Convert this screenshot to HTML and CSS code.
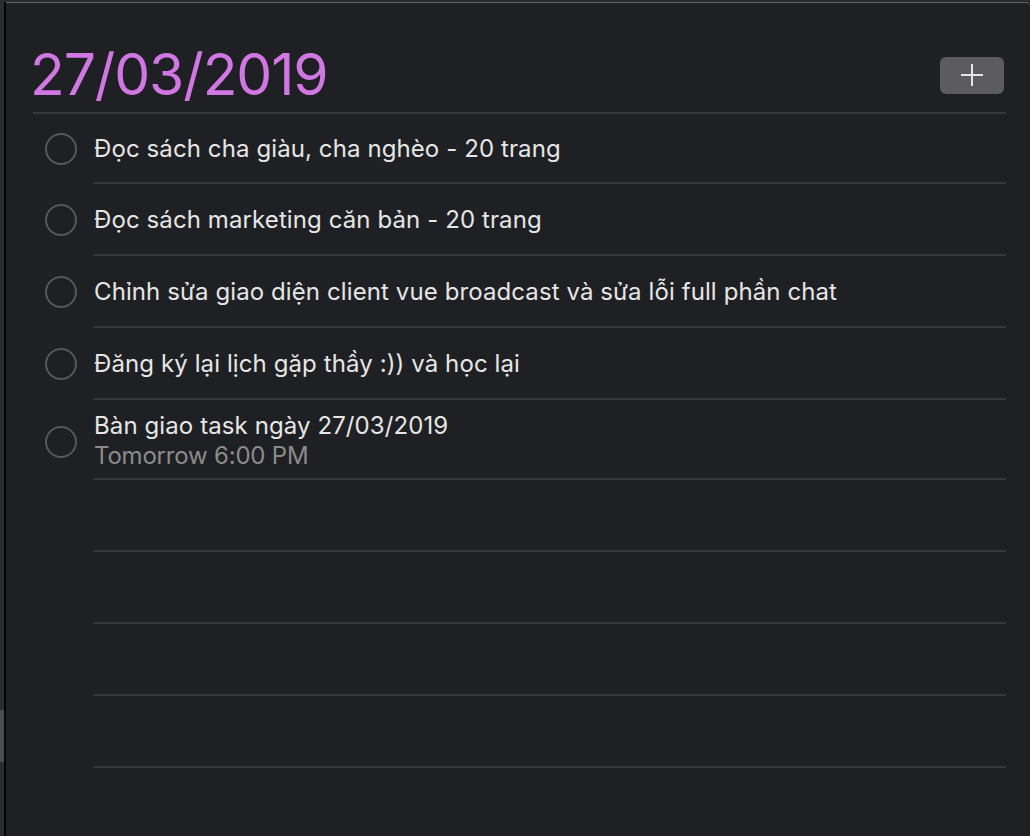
FILE: index.html
```html
<!DOCTYPE html>
<html lang="vi">
<head>
<meta charset="utf-8">
<title>Reminders</title>
<link rel="stylesheet" href="styles.css">
</head>
<body>
<div class="window">
  <div class="sidebar"><div class="thumb"></div></div>
  <main class="main">
    <header class="header">
      <h1 class="title">27/03/2019</h1>
      <button class="add" aria-label="Add">
        <svg width="24" height="24" viewBox="0 0 24 24"><path d="M12 1v22M1 12h22" stroke="#e6e6e6" stroke-width="2" fill="none"/></svg>
      </button>
    </header>
    <ul class="list">
      <li class="row first"><span class="check"><span class="circle"></span></span><div class="body"><span class="text">Đọc sách cha giàu, cha nghèo - 20 trang</span></div></li>
      <li class="row"><span class="check"><span class="circle"></span></span><div class="body"><span class="text">Đọc sách marketing căn bản - 20 trang</span></div></li>
      <li class="row"><span class="check"><span class="circle"></span></span><div class="body"><span class="text">Chỉnh sửa giao diện client vue broadcast và sửa lỗi full phần chat</span></div></li>
      <li class="row"><span class="check"><span class="circle"></span></span><div class="body"><span class="text">Đăng ký lại lịch gặp thầy :)) và học lại</span></div></li>
      <li class="row tall"><span class="check"><span class="circle"></span></span><div class="body"><span class="text">Bàn giao task ngày 27/03/2019</span><span class="sub">Tomorrow 6:00 PM</span></div></li>
      <li class="row empty"><span class="check"></span><div class="body"></div></li>
      <li class="row empty"><span class="check"></span><div class="body"></div></li>
      <li class="row empty"><span class="check"></span><div class="body"></div></li>
      <li class="row empty"><span class="check"></span><div class="body"></div></li>
    </ul>
  </main>
</div>
</body>
</html>
```
FILE: styles.css
```css
html, body {
  margin: 0;
  padding: 0;
  width: 1030px;
  height: 836px;
  overflow: hidden;
  background: #1f2023;
  font-family: Inter, "Noto Sans", "Liberation Sans", sans-serif;
}
.window {
  display: flex;
  height: 836px;
  border-top: 2px solid #2b2b2d;
  box-sizing: border-box;
}
.sidebar {
  width: 4px;
  background: #2b2c2e;
  border-right: 2px solid #050505;
  display: flex;
  flex-direction: column;
  padding-top: 708px;
}
.thumb {
  height: 52px;
  background: #4c4c4e;
}
.main {
  flex: 1;
  border-top: 1px solid #626264;
  padding: 0 24px 0 27px;
  border-top-right-radius: 4px;
}
.header {
  display: flex;
  justify-content: space-between;
  align-items: center;
  height: 85px;
  padding-top: 24px;
  border-bottom: 2px solid #37383a;
}
.title {
  margin: 0 0 0 -3px;
  font-size: 57px;
  font-weight: 400;
  color: #d177e3;
  letter-spacing: -1.1px;
  line-height: 1;
  padding-top: 10px;
}
.add {
  width: 64px;
  height: 37px;
  margin-right: 2px;
  margin-top: 11px;
  border: none;
  border-radius: 6px;
  background: #5c5c5e;
  display: flex;
  align-items: center;
  justify-content: center;
  padding: 0;
}
.list {
  list-style: none;
  margin: 0;
  padding: 0;
}
.row {
  display: flex;
  height: 72px;
}
.row.first { height: 70px; }
.row.tall { height: 80px; }
.check {
  width: 61px;
  flex: none;
  display: flex;
  align-items: center;
}
.circle {
  width: 28px;
  height: 28px;
  margin-left: 12px;
  border: 2px solid #58585a;
  border-radius: 50%;
}
.row.tall .circle { margin-top: 4px; }
.body {
  flex: 1;
  border-bottom: 2px solid #37383a;
  display: flex;
  flex-direction: column;
  justify-content: center;
  padding-top: 2px;
}
.text {
  font-size: 24px;
  color: #e6e6e6;
  line-height: 30px;
  letter-spacing: 0.1px;
}
.row.tall .body { padding-top: 4px; }
.sub {
  font-size: 24px;
  color: #8b8b8d;
  line-height: 30px;
  letter-spacing: -0.2px;
}
```
